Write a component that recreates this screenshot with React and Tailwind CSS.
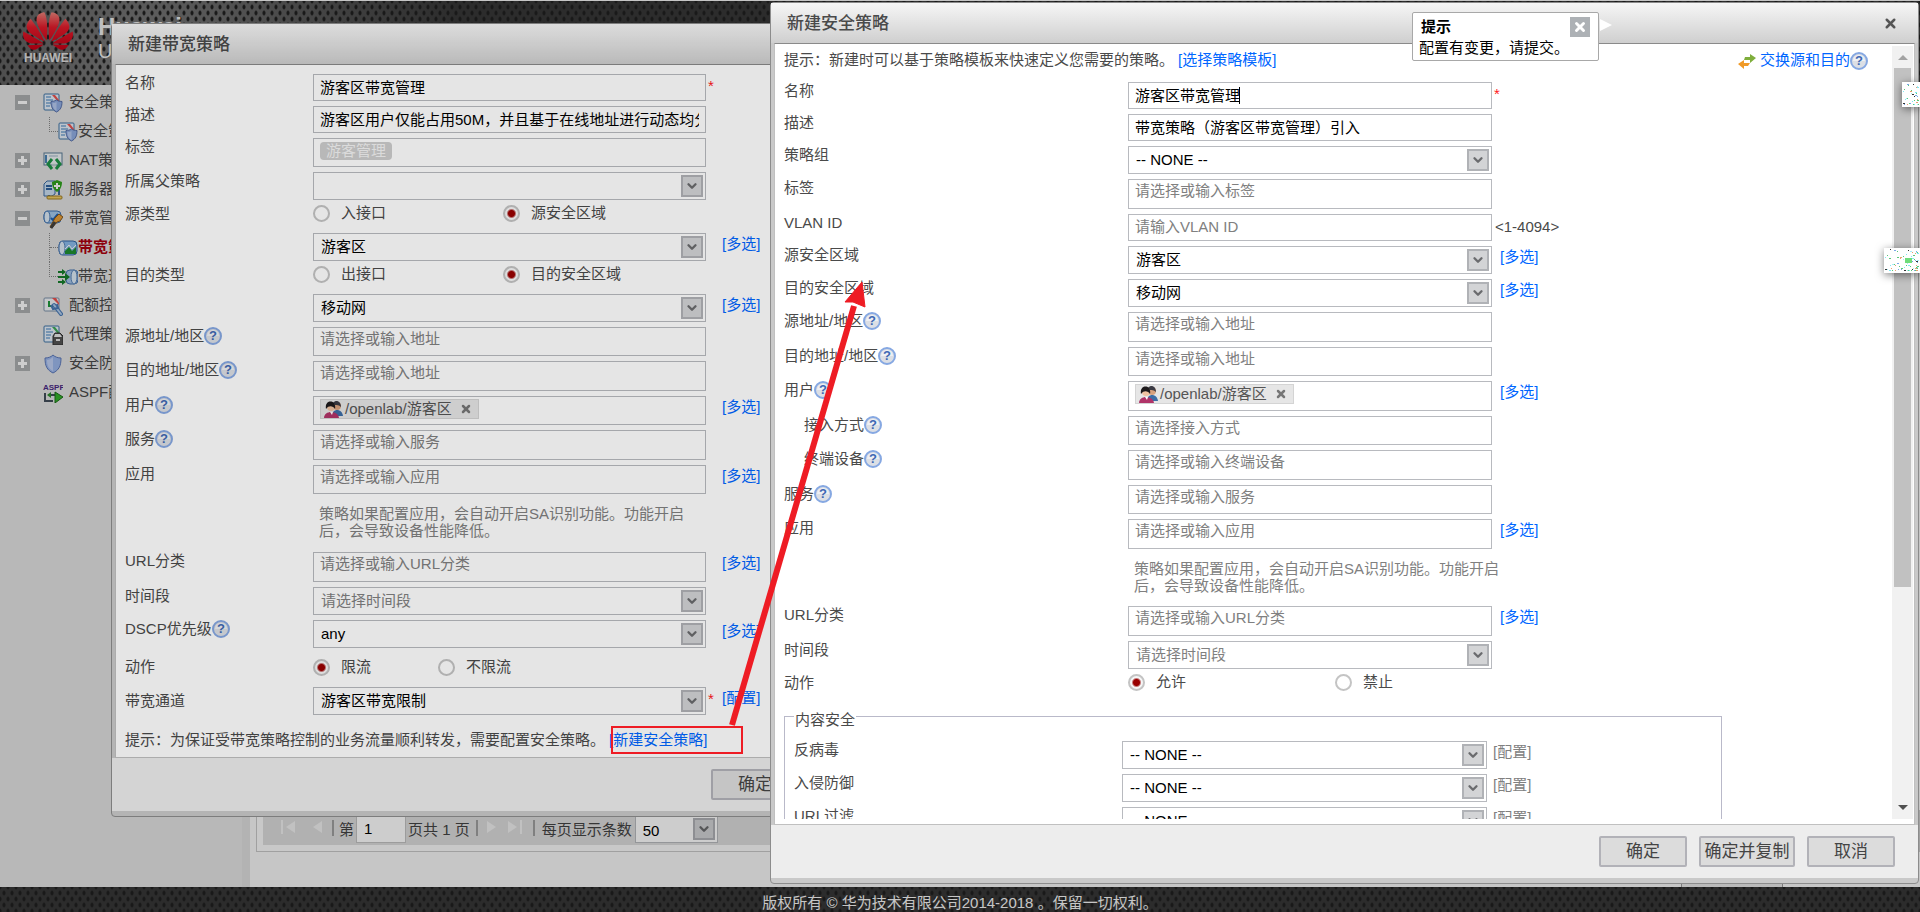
import { useId } from 'react';
import { ChevronDown, X } from 'lucide-react';
import { SiHuawei } from 'react-icons/si';

const MENU = [
  { icon: 'policy', title: '安全策略', toggle: 'minus' },
  { icon: 'policy', title: '安全策略', child: true, last: true },
  { icon: 'nat', title: 'NAT策略', toggle: 'plus' },
  { icon: 'server', title: '服务器负载均衡', toggle: 'plus' },
  { icon: 'bandwidth', title: '带宽管理', toggle: 'minus' },
  { icon: 'traffic', title: '带宽策略', child: true, active: true },
  { icon: 'channel', title: '带宽通道', child: true, last: true },
  { icon: 'quota', title: '配额控制策略', toggle: 'plus' },
  { icon: 'proxy', title: '代理策略' },
  { icon: 'shield', title: '安全防护', toggle: 'plus' },
  { icon: 'aspf', title: 'ASPF配置' },
];

const APP_HINT = '策略如果配置应用，会自动开启SA识别功能。功能开启后，会导致设备性能降低。';

const SHIELD = 'M0 1.5 C2 1.5 4 1 5.5 0 C7 1 9 1.5 11 1.5 C11 7 9.5 10 5.5 12 C1.5 10 0 7 0 1.5 Z';

/* ---------- icons ---------- */

function DocIcon() {
  return (
    <>
      <rect x="1" y="1" width="15" height="16" rx="1" fill="#eaf3fc" stroke="#3f74a8" />
      <path d="M3 4h5M3 7h7M3 10h5M3 13h4" stroke="#3f7fc0" strokeWidth="1" />
    </>
  );
}

function MenuIcon({ name }) {
  return (
    <svg className="shrink-0" width="20" height="20" viewBox="0 0 20 20" fill="none" aria-hidden="true">
      {name === 'policy' && (
        <>
          <DocIcon />
          <path d="M9 2h3l4 5v3z" fill="#ef5350" />
          <path d={SHIELD} transform="translate(8 7)" fill="#93b0e6" stroke="#5670ac" />
          <path d="M13.500 9c-1 1-3 1-4 1 0 4 1 6 4 8z" fill="#bccff5" />
        </>
      )}
      {name === 'nat' && (
        <>
          <rect x="1" y="2" width="18" height="12" fill="#f2f6f9" stroke="#5b7c98" />
          <path d="M3 4v8" stroke="#4d86b8" strokeWidth="2" />
          <path d="M6 5h9" stroke="#9fb6c8" />
          <path d="M9 8l-4 5 4 5M13 8l4 5-4 5" stroke="#1f9a4a" strokeWidth="3" />
          <path d="M10 12v3M12 12v3" stroke="#d6f2df" />
        </>
      )}
      {name === 'server' && (
        <>
          <path d="M1 4l3-3h8v13l-3 2H1z" fill="#cfe2f5" stroke="#3c6fa6" />
          <path d="M3 6h6M3 9h6" stroke="#2f63a0" strokeWidth="2" />
          <path d="M16 8v7M6 15v2" stroke="#3a6a9c" strokeWidth="2" />
          <path d="M9 2l5-2 5 2c0 5-2 8-5 10-3-2-5-5-5-10z" fill="#32a51f" />
          <path d="M14 3v6M11 6h6" stroke="#fff" strokeWidth="2" />
          <rect x="4" y="16" width="15" height="3" rx="1" fill="#f0cf67" stroke="#a37f22" />
        </>
      )}
      {name === 'bandwidth' && (
        <>
          <rect x="1" y="2" width="17" height="12" rx="4" fill="#a8cdf2" stroke="#3f74b4" />
          <ellipse cx="4" cy="8" rx="3" ry="6" fill="#e3f0fc" stroke="#3f74b4" />
          <path d="M8 9l2 2 5-6" stroke="#1c63b8" strokeWidth="2" />
          <path d="M12 9l4-4 4 3-3 4-3 1-5 6-2-1z" fill="#eba23c" stroke="#8a5a1c" />
          <path d="M12 13l-4 6" stroke="#444" strokeWidth="3" />
        </>
      )}
      {name === 'traffic' && (
        <>
          <rect x="1" y="3" width="18" height="14" rx="4" fill="#8fc0f2" stroke="#3468a8" />
          <ellipse cx="4" cy="10" rx="3" ry="7" fill="#e3f0fc" stroke="#5a86bd" />
          <path d="M7 16v-3l4-4 3 4 4-4v7z" fill="#1f9433" />
          <path d="M7 11l4-4 3 4 4-4" stroke="#fff" strokeWidth="1" />
        </>
      )}
      {name === 'channel' && (
        <>
          <rect x="8" y="3" width="12" height="14" rx="4" fill="#a9c8ec" stroke="#4a78b4" />
          <ellipse cx="16" cy="10" rx="3" ry="7" fill="#e3f0fc" stroke="#5a86bd" />
          <path d="M0 5h5M0 10h8M0 15h5" stroke="#17802c" strokeWidth="2" />
          <path d="M4 2l4 3-4 3zM7 6l5 4-5 4zM4 12l4 3-4 3z" fill="#17802c" />
        </>
      )}
      {name === 'quota' && (
        <>
          <rect x="1" y="2" width="15" height="13" rx="1" fill="#f4f7fa" stroke="#7d93ab" />
          <path d="M9 2h4l3 5v2z" fill="#ef5350" />
          <path d="M6 5v5h5" stroke="#209a3e" strokeWidth="2" />
          <path d="M11 9l7 9" stroke="#4c7cb8" strokeWidth="4" strokeLinecap="round" />
          <path d="M11 9l7 9" stroke="#b7d2f0" strokeWidth="2" strokeLinecap="round" />
          <path d="M8 9l2 4 5-1-1-4" stroke="#4c7cb8" strokeWidth="2" />
        </>
      )}
      {name === 'proxy' && (
        <>
          <DocIcon />
          <path d="M9 2h3l4 5v3z" fill="#3fae5a" />
          <path d="M10 11l2-3h5l3 3v9H10z" fill="#555" stroke="#333" />
          <path d="M12 9h5l2 3h-8z" fill="#eee" />
          <path d="M13 15h4" stroke="#e8e8e8" strokeWidth="2" />
        </>
      )}
      {name === 'shield' && (
        <>
          <path d="M2 4C5 4 8 3 10 1c2 2 5 3 8 3 0 8-2 12-8 15C4 16 2 12 2 4z" fill="#9fb9ee" stroke="#5d7abb" />
          <path d="M10 3v14C6 15 4 12 4 6c2 0 4-1 6-3z" fill="#c2d3f7" />
        </>
      )}
      {name === 'aspf' && (
        <>
          <text x="0" y="7" fontSize="8" fontWeight="700" fill="#4a2a86" fontFamily="Liberation Sans, sans-serif">ASPF</text>
          <path d="M2 10v8h8M5 12h8" stroke="#44505c" strokeWidth="2" />
          <path d="M8 9l-4 3 4 3z" fill="#2f8f2f" />
          <path d="M12 9l8 5-8 6z" fill="#35b52a" stroke="#1b6e18" />
        </>
      )}
    </svg>
  );
}

function HelpIcon() {
  return (
    <svg className="shrink-0" width="18" height="18" viewBox="0 0 18 18" role="img" aria-label="帮助">
      <circle cx="9" cy="9" r="8" fill="#dcdfe5" stroke="#86a8e2" strokeWidth="2" />
      <path d="M3 9a6 6 0 0 1 12 0z" fill="#eef0f3" />
      <text x="9" y="13" textAnchor="middle" fontSize="13" fontWeight="700" fill="#3f68b4" fontFamily="Liberation Sans, sans-serif">?</text>
    </svg>
  );
}

function UsersIcon() {
  return (
    <svg className="shrink-0" width="20" height="17" viewBox="0 0 20 17" aria-hidden="true">
      <circle cx="14" cy="5" r="4" fill="#d9a27e" />
      <path d="M9 6c0-8 9-8 9 0-2-2-6-3-9 0z" fill="#3b3b44" />
      <path d="M9 15c0-8 10-8 11 0z" fill="#3d6ea6" />
      <circle cx="8" cy="6" r="4" fill="#f0c3a2" />
      <path d="M3 8C1-2 14-2 12 8c-2-3-6-4-9 0z" fill="#1d1a1c" />
      <path d="M1 17c0-8 14-8 15 0z" fill="#b03468" />
      <path d="M7 11l2 3 1-3z" fill="#fff" />
    </svg>
  );
}

function SwapIcon() {
  return (
    <svg width="18" height="16" viewBox="0 0 18 16" aria-hidden="true">
      <path d="M7 4h5V1l6 4-6 5V7H6z" fill="#7fae3c" />
      <path d="M12 10H6V7L0 11l6 5v-3h4z" fill="#f09a28" />
    </svg>
  );
}

/* ---------- form parts ---------- */

function Row({ label, help, indent, labelWidth, id, children }) {
  return (
    <div className="flex items-start">
      <div className={`flex shrink-0 items-center leading-[18px] ${labelWidth} ${indent ? 'pl-5' : ''}`}>
        <label htmlFor={id}>{label}</label>
        {help && <HelpIcon />}
      </div>
      {children}
    </div>
  );
}

function Star() {
  return <span className="w-2 pl-[2px] leading-6 text-[#ff1a1a]">*</span>;
}

function Link({ children }) {
  return (
    <a href="#" className="leading-[22px] whitespace-nowrap text-[#0066ff]">
      {children}
    </a>
  );
}

function UserChip() {
  return (
    <span className="flex h-5 items-center border border-[#d4d4d4] bg-[#e6e6e6] pr-[6px] pl-[2px] leading-[18px] whitespace-nowrap text-[#555]">
      <UsersIcon />
      <span className="pl-[2px]">/openlab/游客区</span>
      <button type="button" aria-label="删除" className="ml-2">
        <X size={12} strokeWidth={5} color="#777" />
      </button>
    </span>
  );
}

function Dropdown({ id, value, width, height = 'h-[28px]', muted, label }) {
  return (
    <div className={`relative shrink-0 ${width} ${height}`}>
      <select
        id={id}
        aria-label={label}
        className={`h-full w-full appearance-none border border-[#b8babf] bg-white pl-[7px] outline-none ${muted ? 'text-[#808080]' : 'text-black'}`}
      >
        <option>{value}</option>
      </select>
      <span className="pointer-events-none absolute top-[3px] right-[3px] flex size-[22px] items-center justify-center border-2 border-[#b0b2b6] bg-[#d3d4d6]">
        <ChevronDown size={14} strokeWidth={4} color="#6a6b6e" />
      </span>
    </div>
  );
}

function Radios({ options, checked, gap, name }) {
  return (
    <div className="flex">
      {options.map((option, i) => (
        <label key={option} className={`flex items-start gap-[11px] leading-4 ${gap}`}>
          <input
            type="radio"
            name={name}
            defaultChecked={i === checked}
            className="size-[17px] shrink-0 appearance-none rounded-full border-2 border-[#c4c4c4] bg-white checked:bg-[radial-gradient(circle,#990000_3px,#f6f6f6_5px)]"
          />
          {option}
        </label>
      ))}
    </div>
  );
}

// one line of the form; kind decides which control is drawn
function Field({ field, labelWidth, width, radioGap }) {
  const id = useId();
  const { kind = 'text', label, value, placeholder, height = 'h-[27px]' } = field;
  const multiple = field.link && <Link>{field.link}</Link>;

  return (
    <Row label={label} help={field.help} indent={field.indent} labelWidth={labelWidth} id={id}>
      {kind === 'text' && (
        <span className={`relative shrink-0 ${width}`}>
          <input
            id={id}
            defaultValue={value}
            placeholder={placeholder}
            className={`block w-full border border-[#b8babf] bg-white px-[6px] pb-[2px] text-black outline-none placeholder:text-[#808080] ${height}`}
          />
          {field.caret && <span className="absolute top-[5px] left-[111px] h-[17px] w-px bg-black" />}
        </span>
      )}
      {kind === 'tags' && (
        <div className={`flex shrink-0 items-start border border-[#b8babf] bg-white pl-[6px] ${width} ${height}`}>
          {field.tag && (
            <span className="mt-[3px] rounded bg-[#cdcdcd] px-[6px] leading-[18px] text-[#f4f4f4]">{field.tag}</span>
          )}
          {field.user && <span className="mt-[2px]"><UserChip /></span>}
          <input
            id={id}
            placeholder={placeholder}
            className="h-[22px] min-w-0 grow outline-none placeholder:text-[#808080]"
          />
        </div>
      )}
      {kind === 'select' && <Dropdown id={id} value={value} width={width} muted={field.muted} />}
      {kind === 'radio' && (
        <div className="h-[23px]">
          <Radios name={id} options={field.options} checked={field.checked} gap={radioGap} />
        </div>
      )}
      {field.required && <Star />}
      {field.suffix && <span className="pl-[3px] leading-[26px]">{field.suffix}</span>}
      {multiple && <span className={field.linkPad ?? 'pl-4'}>{multiple}</span>}
    </Row>
  );
}

function Hint({ indent }) {
  return (
    <div className={`pt-[6px] leading-[17px] text-[#808080] ${indent}`}>
      <p className="w-[368px]">{APP_HINT}</p>
    </div>
  );
}

function DialogButton({ children, width }) {
  return (
    <button
      type="button"
      className={`h-[31px] rounded-xs border-2 border-[#b2b2b8] bg-[#dcdcdc] text-[17px] leading-none text-[#444] ${width}`}
    >
      {children}
    </button>
  );
}

function Dialog({ title, place, footer, children }) {
  return (
    <section role="dialog" aria-label={title} className={`absolute flex flex-col rounded border border-[#8c8c8c] bg-[#c9c9c9] ${place}`}>
      <header className="flex h-10 shrink-0 items-center justify-between bg-linear-to-b from-[#f6f6f6] to-[#cfcfcf] pr-5 pl-4">
        <h2 className="pt-[2px] text-[17px] font-medium text-[#4a4a4a]">{title}</h2>
        <button type="button" aria-label="关闭">
          <X size={15} strokeWidth={4} color="#555" />
        </button>
      </header>
      <div className="mx-[3px] flex min-h-0 grow border border-t-[#8a8a8a] border-[#c0c0c0] bg-white">{children}</div>
      <footer className="flex h-[53px] shrink-0 items-start justify-end gap-3 bg-[#ededed] pt-[11px] pr-[23px]">{footer}</footer>
      <div className="h-[5px] shrink-0" />
    </section>
  );
}

/* ---------- dialogs ---------- */

const BANDWIDTH_TOP = [
  { label: '名称', value: '游客区带宽管理', required: true },
  { label: '描述', value: '游客区用户仅能占用50M，并且基于在线地址进行动态均分' },
  { label: '标签', kind: 'tags', tag: '游客管理', height: 'h-[29px]' },
  { label: '所属父策略', kind: 'select', value: '' },
  { label: '源类型', kind: 'radio', options: ['入接口', '源安全区域'], checked: 1 },
  { label: '', kind: 'select', value: '游客区', link: '[多选]' },
  { label: '目的类型', kind: 'radio', options: ['出接口', '目的安全区域'], checked: 1 },
  { label: '', kind: 'select', value: '移动网', link: '[多选]' },
  { label: '源地址/地区', kind: 'tags', help: true, placeholder: '请选择或输入地址', height: 'h-[29px]' },
  { label: '目的地址/地区', kind: 'tags', help: true, placeholder: '请选择或输入地址', height: 'h-[30px]' },
  { label: '用户', kind: 'tags', help: true, user: true, link: '[多选]', height: 'h-[29px]' },
  { label: '服务', kind: 'tags', help: true, placeholder: '请选择或输入服务', height: 'h-[30px]' },
  { label: '应用', kind: 'tags', placeholder: '请选择或输入应用', link: '[多选]', height: 'h-[29px]' },
];

const BANDWIDTH_BOTTOM = [
  { label: 'URL分类', kind: 'tags', placeholder: '请选择或输入URL分类', link: '[多选]', height: 'h-[30px]' },
  { label: '时间段', kind: 'select', value: '请选择时间段', muted: true },
  { label: 'DSCP优先级', kind: 'select', help: true, value: 'any', link: '[多选]' },
];

const SECURITY_TOP = [
  { label: '名称', value: '游客区带宽管理', required: true, caret: true },
  { label: '描述', value: '带宽策略（游客区带宽管理）引入' },
  { label: '策略组', kind: 'select', value: '-- NONE --' },
  { label: '标签', kind: 'tags', placeholder: '请选择或输入标签', height: 'h-[30px]' },
  { label: 'VLAN ID', placeholder: '请输入VLAN ID', suffix: '<1-4094>' },
  { label: '源安全区域', kind: 'select', value: '游客区', link: '[多选]' },
  { label: '目的安全区域', kind: 'select', value: '移动网', link: '[多选]' },
  { label: '源地址/地区', kind: 'tags', help: true, placeholder: '请选择或输入地址', height: 'h-[30px]' },
  { label: '目的地址/地区', kind: 'tags', help: true, placeholder: '请选择或输入地址', height: 'h-[29px]' },
  { label: '用户', kind: 'tags', help: true, user: true, link: '[多选]', height: 'h-[30px]' },
  { label: '接入方式', kind: 'tags', help: true, indent: true, placeholder: '请选择接入方式', height: 'h-[29px]' },
  { label: '终端设备', kind: 'tags', help: true, indent: true, placeholder: '请选择或输入终端设备', height: 'h-[30px]' },
  { label: '服务', kind: 'tags', help: true, placeholder: '请选择或输入服务', height: 'h-[29px]' },
  { label: '应用', kind: 'tags', placeholder: '请选择或输入应用', link: '[多选]', height: 'h-[30px]' },
];

const SECURITY_BOTTOM = [
  { label: 'URL分类', kind: 'tags', placeholder: '请选择或输入URL分类', link: '[多选]', height: 'h-[30px]' },
  { label: '时间段', kind: 'select', value: '请选择时间段', muted: true },
  { label: '动作', kind: 'radio', options: ['允许', '禁止'], checked: 0 },
];

const CONTENT_SECURITY = ['反病毒', '入侵防御', 'URL过滤'];

function BandwidthDialog() {
  const renderField = (field, i) => (
    <Field key={i} field={field} labelWidth="w-[188px]" width="w-[393px]" radioGap="w-[190px]" />
  );

  return (
    <Dialog
      title="新建带宽策略"
      place="top-[23px] left-[111px] w-[812px]"
      footer={
        <>
          <DialogButton width="w-[88px]">确定</DialogButton>
          <DialogButton width="w-[88px]">取消</DialogButton>
        </>
      }
    >
      <form className="flex grow flex-col gap-[5px] pt-[9px] pl-[9px]">
        {BANDWIDTH_TOP.map(renderField)}
        <Hint indent="pl-[194px] pb-2" />
        {BANDWIDTH_BOTTOM.map(renderField)}
        <div className="flex h-[29px] items-center">
          <span className="w-[188px]">动作</span>
          <Radios name="limit" options={['限流', '不限流']} checked={0} gap="w-[125px]" />
        </div>
        <div className="flex items-start">
          <label htmlFor="channel" className="w-[188px] leading-7">带宽通道</label>
          <Dropdown id="channel" value="游客区带宽限制" width="w-[393px]" />
          <Star />
          <span className="pl-2"><Link>[配置]</Link></span>
        </div>
        <p className="h-[37px] leading-10">
          提示：为保证受带宽策略控制的业务流量顺利转发，需要配置安全策略。
          <a href="#" className="pl-1 text-[#0066ff]">[新建安全策略]</a>
        </p>
      </form>
    </Dialog>
  );
}

function SecurityDialog() {
  const renderField = (field, i) => (
    <Field
      key={i}
      field={{ linkPad: 'pl-2', ...field }}
      labelWidth="w-[344px]"
      width="w-[364px]"
      radioGap="w-[207px]"
    />
  );

  return (
    <Dialog
      title="新建安全策略"
      place="top-[2px] right-px bottom-[28px] left-[770px]"
      footer={
        <>
          <DialogButton width="w-[88px]">确定</DialogButton>
          <DialogButton width="w-[96px]">确定并复制</DialogButton>
          <DialogButton width="w-[88px]">取消</DialogButton>
        </>
      }
    >
      <form className="mb-[5px] flex min-w-0 grow flex-col gap-[5px] overflow-hidden pl-[9px]">
        <div className="flex h-[33px] shrink-0 items-center justify-between pr-6">
          <p>
            提示：新建时可以基于策略模板来快速定义您需要的策略。
            <a href="#" className="pl-1 text-[#0066ff]">[选择策略模板]</a>
          </p>
          <a href="#" className="flex items-center text-[#0066ff]">
            <SwapIcon />
            <span className="pl-1">交换源和目的</span>
            <HelpIcon />
          </a>
        </div>
        {SECURITY_TOP.map(renderField)}
        <Hint indent="pl-[350px] pb-[7px]" />
        {SECURITY_BOTTOM.map(renderField)}
        <fieldset className="mt-[2px] mr-[170px] flex shrink-0 flex-col gap-[5px] border border-[#b9b9c9] pl-[9px]">
          <legend className="mb-2 pt-2 pr-px pl-px leading-4">内容安全</legend>
          <div className="flex flex-col gap-[5px] pt-[5px]">
            {CONTENT_SECURITY.map((name) => (
              <div key={name} className="flex items-start">
                <label htmlFor={name} className="w-[328px] leading-[18px]">{name}</label>
                <Dropdown id={name} value="-- NONE --" width="w-[365px]" />
                <a href="#" className="pl-[6px] leading-[22px] text-[#808080]">[配置]</a>
              </div>
            ))}
          </div>
        </fieldset>
      </form>
      <div className="mt-[2px] mr-px mb-[5px] flex w-[21px] shrink-0 flex-col items-center bg-[#f1f1f1]">
        <span className="mt-[9px] mb-2 border-x-5 border-b-5 border-x-transparent border-b-[#a3a3a3]" />
        <span className="h-[519px] w-[17px] bg-[#c1c1c1]" />
        <span className="mt-auto mb-[9px] border-x-5 border-t-5 border-x-transparent border-t-[#505050]" />
      </div>
    </Dialog>
  );
}

/* ---------- page behind the dialogs ---------- */

function Sidebar() {
  return (
    <nav className="w-[250px] shrink-0 border-r-8 border-[#dfdfdf] bg-[#e5e5e5] pt-[3px]">
      {MENU.map((item, i) => (
        <div key={i} className="flex h-[29px] items-center pl-[15px]">
          {item.toggle ? (
            <button type="button" aria-label="展开" className="relative size-[15px] bg-[#adafb2]">
              <span className="absolute top-[6px] left-[3px] h-[3px] w-[9px] bg-white" />
              {item.toggle === 'plus' && <span className="absolute top-[3px] left-[6px] h-[9px] w-[3px] bg-white" />}
            </button>
          ) : (
            <span className="w-[15px]" />
          )}
          {item.child && (
            <span className={`ml-[19px] w-[9px] self-stretch ${item.last ? '' : 'border-l border-dotted border-[#888]'}`}>
              <span className={`block h-1/2 border-b border-dotted border-[#888] ${item.last ? 'border-l' : ''}`} />
            </span>
          )}
          <a
            href="#"
            className={`flex items-center whitespace-nowrap ${item.child ? '' : 'gap-[6px] pl-[13px]'} ${item.active ? 'font-bold text-[#b00010]' : 'text-[#4a4a4a]'}`}
          >
            <MenuIcon name={item.icon} />
            {item.title}
          </a>
        </div>
      ))}
    </nav>
  );
}

function PageArrow({ flip, bar }) {
  return (
    <button type="button" aria-label={flip ? '下一页' : '上一页'}>
      <svg className={flip ? 'rotate-180' : ''} width="15" height="14" viewBox="0 0 15 14" fill="#f0f0f0" aria-hidden="true">
        {bar && <path d="M1 0h2v14H1z" />}
        <path d="M15 1v12L6 7z" />
      </svg>
    </button>
  );
}

function Pager() {
  return (
    <div className="m-[6px] mt-0 flex h-[34px] items-start bg-[#dddddd] pt-1 pl-[17px] leading-[30px] text-[#444]">
      <div className="flex h-6 items-center gap-3">
        <PageArrow bar />
        <PageArrow />
      </div>
      <span className="mt-[5px] ml-[10px] h-4 w-[3px] border-l-2 border-[#a0a0a0]" />
      <label htmlFor="page" className="pr-[2px] pl-1">第</label>
      <input id="page" defaultValue="1" className="h-7 w-[50px] border border-[#c2c2c2] bg-white px-[7px] text-black" />
      <span className="pl-[2px]">页共 1 页</span>
      <span className="mt-[5px] ml-[6px] h-4 w-[3px] border-l-2 border-[#a0a0a0]" />
      <div className="flex h-6 items-center gap-[6px] pl-2">
        <PageArrow flip />
        <PageArrow flip bar />
      </div>
      <span className="mt-[5px] ml-[10px] h-4 w-[3px] border-l-2 border-[#a0a0a0]" />
      <span className="pr-[3px] pl-[6px]">每页显示条数</span>
      <Dropdown label="每页显示条数" value="50" width="w-[83px]" />
    </div>
  );
}

const CARBON =
  'bg-[radial-gradient(#202020_1px,transparent_2px),radial-gradient(#202020_1px,transparent_2px)] bg-[size:8px_12px] bg-[position:0_0,4px_6px]';

/* ---------- floating things ---------- */

function Toast() {
  return (
    <div role="status" className="absolute top-3 right-[321px] h-[49px] w-[187px] rounded-xs border border-[#a8a8a8] bg-white pt-1 pl-[6px] text-black">
      <div className="flex items-start justify-between pr-2 pl-[2px]">
        <h3 className="leading-5 font-bold">提示</h3>
        <button type="button" aria-label="关闭提示" className="flex size-5 items-center justify-center bg-[#adb1b5]">
          <X size={14} strokeWidth={5} color="#fff" />
        </button>
      </div>
      <p className="leading-[22px] whitespace-nowrap">配置有变更，请提交。</p>
      <span className="absolute top-[6px] left-[187px] border-y-6 border-l-12 border-y-transparent border-l-white" />
    </div>
  );
}

const SPECK_COLORS = ['#7fe8f5', '#58c878', '#7aa8e8', '#333333', '#a8ecf5', '#e8a070', '#58c878'];

// tiny preview of a diagram that sticks out of the window edge
function Thumbnail({ place, width, badge }) {
  const specks = Array.from({ length: width * 2 }, (_, i) => ({
    x: Math.floor(Math.abs(Math.sin(i * 12 + 1)) * (width - 3)),
    y: Math.floor(Math.abs(Math.cos(i * 7 + 2)) * 22),
    color: SPECK_COLORS[i % SPECK_COLORS.length],
  }));

  return (
    <div className={`absolute right-0 bg-white shadow-[0_2px_8px_rgba(0,0,0,0.5)] ${place}`}>
      <svg width={width} height="25" className="block" aria-hidden="true">
        {specks.map((s, i) => (
          <rect key={i} x={s.x + 1} y={s.y + 1} width={i % 3 ? 1 : 2} height="1" fill={s.color} />
        ))}
        {badge && <rect x="21" y="10" width="7" height="5" fill="#6fdc7a" />}
      </svg>
    </div>
  );
}

function Annotation() {
  return (
    <>
      <span className="absolute top-[726px] left-[611px] h-7 w-[132px] border-2 border-[#ee1c24]" />
      <svg className="absolute top-[270px] left-[720px]" width="160" height="470" aria-hidden="true">
        <path d="M12 455L134 36" stroke="#ee1c24" strokeWidth="6" />
        <path d="M142 12L125 32L133 32L145 37Z" fill="#ee1c24" stroke="#ee1c24" strokeLinejoin="round" />
      </svg>
    </>
  );
}

export default function App() {
  return (
    <div className="relative flex h-screen flex-col overflow-hidden bg-[#f7f7f7] font-['Liberation_Sans','Noto_Sans_CJK_SC',sans-serif] text-[15px] text-[#4a4a4a]">
      <header className="relative h-[85px] shrink-0 border-t border-[#f5f5f5] bg-[#383838] bg-[radial-gradient(circle_at_140px_70px,#808080,#383838_320px)]">
        <div className={`flex h-full gap-[25px] pt-2 pl-[23px] ${CARBON}`}>
          <svg width="0" height="0" className="absolute" aria-hidden="true">
            <linearGradient id="petals" x1="0" y1="0" x2="0" y2="1">
              <stop offset="0" stopColor="#f0857c" />
              <stop offset="0.4" stopColor="#e81c2c" />
              <stop offset="1" stopColor="#c80016" />
            </linearGradient>
          </svg>
          <div className="flex w-[50px] flex-col items-center">
            <SiHuawei size={50} fill="url(#petals)" className="-my-[3px]" />
            <span className="-mt-px text-xs leading-3 font-bold text-[#e0e0e0]">HUAWEI</span>
          </div>
          <div className="text-[#eeeeee]">
            <h1 className="pt-1 text-2xl leading-7 font-bold">Huawei</h1>
            <p className="text-xl leading-5">USG6000</p>
          </div>
        </div>
      </header>

      <div className="flex min-h-0 grow">
        <Sidebar />
        <main className="flex grow flex-col justify-end pl-[6px]">
          <div className="border border-[#c8c8c8] bg-[#f9f9f9]">
            <Pager />
          </div>
          <div className="mt-8 mr-[137px] h-[3px] w-[102px] self-end border-x border-[#999] bg-[#e8e8e8]" />
        </main>
      </div>

      <footer className={`h-[25px] shrink-0 bg-[#383838] text-center leading-8 text-[#f7f7f7] ${CARBON}`}>
        版权所有 © 华为技术有限公司2014-2018 。保留一切权利。
      </footer>

      <div className="absolute inset-0 bg-black/10" />
      <BandwidthDialog />
      <div className="absolute inset-0 bg-black/10" />
      <SecurityDialog />
      <Toast />
      <Thumbnail place="top-[82px]" width={18} />
      <Thumbnail place="top-[248px]" width={36} badge />
      <Annotation />
    </div>
  );
}
